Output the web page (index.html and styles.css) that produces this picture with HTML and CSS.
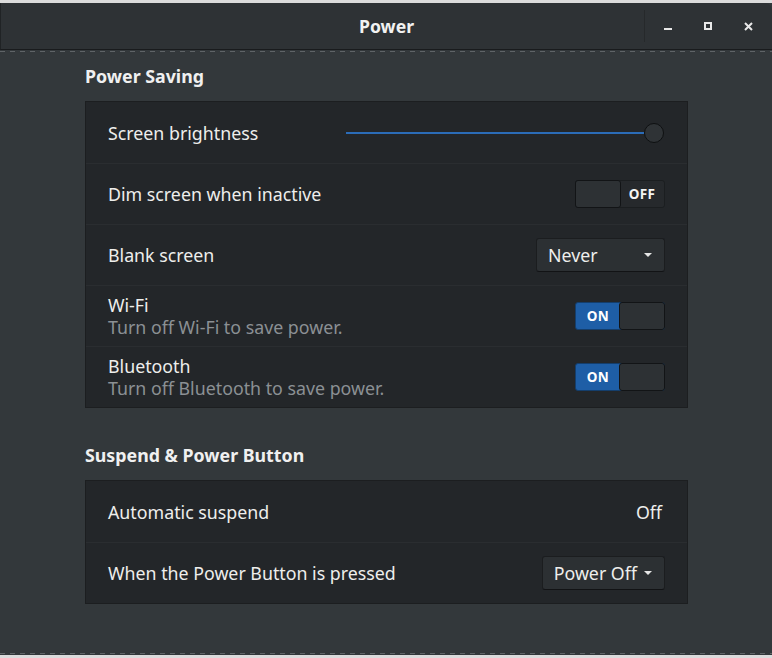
FILE: index.html
```html
<!DOCTYPE html>
<html lang="en">
<head>
<meta charset="utf-8">
<title>Power</title>
<link rel="stylesheet" href="styles.css">
</head>
<body>
<div class="window">
  <header class="titlebar">
    <div class="spacer"></div>
    <div class="title">Power</div>
    <div class="controls">
      <span class="vsep"></span>
      <button class="wbtn" aria-label="Minimize"><span class="ico-min"></span></button>
      <button class="wbtn" aria-label="Maximize"><span class="ico-max"></span></button>
      <button class="wbtn" aria-label="Close">
        <svg width="9" height="9" viewBox="0 0 9 9"><path d="M1 1 L8 8 M8 1 L1 8" stroke="#e8e8e8" stroke-width="2" fill="none"/></svg>
      </button>
    </div>
  </header>
  <div class="dash"></div>
  <main class="content">
    <h2 class="section-title">Power Saving</h2>
    <div class="panel">
      <div class="row">
        <span class="label">Screen brightness</span>
        <div class="slider">
          <div class="track"></div>
          <div class="knob"></div>
        </div>
      </div>
      <div class="row">
        <span class="label">Dim screen when inactive</span>
        <div class="switch off">
          <span class="sw-knob"></span>
          <span class="sw-text">OFF</span>
        </div>
      </div>
      <div class="row">
        <span class="label">Blank screen</span>
        <div class="combo wide">
          <span>Never</span>
          <span class="caret"></span>
        </div>
      </div>
      <div class="row">
        <div class="label-stack">
          <span class="label">Wi-Fi</span>
          <span class="sub">Turn off Wi-Fi to save power.</span>
        </div>
        <div class="switch on">
          <span class="sw-text">ON</span>
          <span class="sw-knob"></span>
        </div>
      </div>
      <div class="row">
        <div class="label-stack">
          <span class="label">Bluetooth</span>
          <span class="sub">Turn off Bluetooth to save power.</span>
        </div>
        <div class="switch on">
          <span class="sw-text">ON</span>
          <span class="sw-knob"></span>
        </div>
      </div>
    </div>

    <h2 class="section-title second">Suspend &amp; Power Button</h2>
    <div class="panel">
      <div class="row">
        <span class="label">Automatic suspend</span>
        <span class="value">Off</span>
      </div>
      <div class="row">
        <span class="label">When the Power Button is pressed</span>
        <div class="combo">
          <span>Power Off</span>
          <span class="caret"></span>
        </div>
      </div>
    </div>
  </main>
  <div class="dash bottom"></div>
</div>
</body>
</html>
```

FILE: styles.css
```css
* { box-sizing: border-box; }

html, body {
  margin: 0;
  padding: 0;
  background: #dcdcdc;
  height: 658px;
  overflow: hidden;
}

body {
  font-family: "Noto Sans", "Open Sans", sans-serif;
  font-size: 17.8px;
  color: #eeeeec;
}

.window {
  margin-top: 3px;
  height: 652px;
  display: flex;
  flex-direction: column;
  background: #33383b;
}

.titlebar {
  height: 47px;
  flex: none;
  display: grid;
  grid-template-columns: 1fr auto 1fr;
  align-items: center;
  background: #2e3235;
  border-left: 1px solid #202325;
  border-bottom: 1px solid #191b1d;
  border-top-right-radius: 7px;
}

.title {
  font-weight: 700;
  font-size: 17.6px;
  color: #f2f2f2;
}

.controls {
  justify-self: end;
  display: flex;
  align-items: center;
  padding-right: 4px;
  height: 100%;
}

.vsep {
  width: 1px;
  height: 32px;
  background: #26292b;
  margin-right: 3px;
}

.wbtn {
  width: 40px;
  height: 46px;
  border: 0;
  padding: 0;
  background: transparent;
  display: flex;
  align-items: center;
  justify-content: center;
}

.ico-min {
  width: 8px;
  height: 8px;
  border-bottom: 2px solid #e8e8e8;
}

.ico-max {
  width: 8px;
  height: 8px;
  border: 2px solid #e8e8e8;
}

.dash {
  flex: none;
  height: 1px;
  margin-top: 1px;
  background: repeating-linear-gradient(to right, #5f6467 0 5px, transparent 5px 10px);
}

.dash.bottom {
  margin-top: 0;
  margin-bottom: 1px;
}

.content {
  flex: 1;
  padding: 14px 0 0 85px;
}

.section-title {
  margin: 0 0 15px;
  font-size: 17.8px;
  line-height: 20px;
  font-weight: 700;
  color: #f0f0f0;
}

.section-title.second {
  margin-top: 37px;
}

.panel {
  width: 603px;
  background: #232629;
  border: 1px solid #1c1e20;
}

.row {
  height: 61px;
  display: flex;
  align-items: center;
  justify-content: space-between;
  padding: 0 22px 0 22px;
}

.row + .row {
  border-top: 1px solid #2a2d30;
  height: 61px;
}

.label {
  font-size: 17.8px;
  line-height: 22px;
}

.label-stack {
  display: flex;
  flex-direction: column;
}

.sub {
  font-size: 17.8px;
  line-height: 22px;
  color: #8b9094;
}

.value {
  font-size: 17.8px;
  margin-right: 3px;
}

/* slider */
.slider {
  width: 318px;
  height: 20px;
  display: flex;
  align-items: center;
  margin-right: 1px;
}

.track {
  flex: 1;
  height: 2px;
  background: #2b6cb8;
}

.knob {
  width: 20px;
  height: 20px;
  border-radius: 50%;
  background: #2f3336;
  border: 1px solid #0e1011;
}

/* switches */
.switch {
  width: 90px;
  height: 28px;
  display: flex;
  border: 1px solid #1b1e20;
  border-radius: 3px;
  background: #26292c;
}

.sw-knob {
  width: 46px;
  margin: -1px;
  background: #2d3134;
  border: 1px solid #121416;
  border-radius: 3px;
}

.sw-text {
  flex: 1;
  display: flex;
  align-items: center;
  justify-content: center;
  font-size: 13.5px;
  font-weight: 700;
  color: #f4f4f4;
  letter-spacing: 0.3px;
}

.switch.on {
  background: #1e5ea6;
  border-color: #143e6c;
}

.switch.on .sw-text {
  color: #ffffff;
}

/* combo boxes */
.combo {
  height: 34px;
  display: flex;
  align-items: center;
  justify-content: space-between;
  gap: 7px;
  padding: 0 12px 0 11px;
  background: #2c3033;
  border: 1px solid #1b1d1f;
  border-bottom-color: #121315;
  border-radius: 3px;
  font-size: 17.8px;
}

.combo.wide {
  width: 129px;
}

.caret {
  width: 0;
  height: 0;
  border-left: 4px solid transparent;
  border-right: 4px solid transparent;
  border-top: 4px solid #e6e6e6;
}
```
